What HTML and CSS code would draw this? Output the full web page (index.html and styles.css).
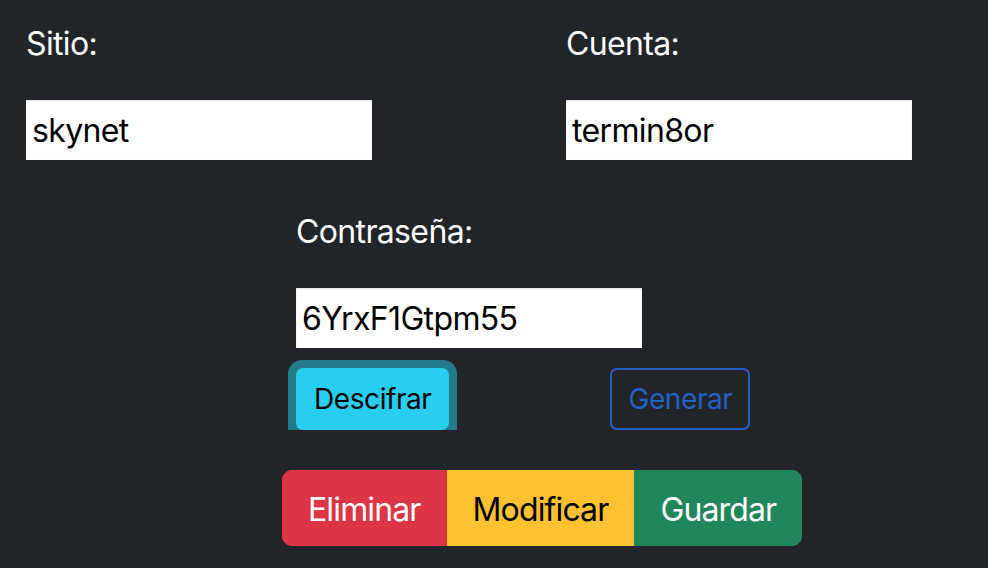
FILE: index.html
```html
<!DOCTYPE html>
<html lang="es">
<head>
<meta charset="utf-8">
<title>Contraseñas</title>
<link rel="stylesheet" href="styles.css">
</head>
<body>
<main class="page">
  <div class="row-top">
    <div class="field">
      <label class="label" for="sitio">Sitio:</label>
      <input class="input" id="sitio" type="text" value="skynet">
    </div>
    <div class="field">
      <label class="label" for="cuenta">Cuenta:</label>
      <input class="input" id="cuenta" type="text" value="termin8or">
    </div>
  </div>
  <div class="field field-pass">
    <label class="label" for="pass">Contraseña:</label>
    <input class="input" id="pass" type="text" value="6YrxF1Gtpm55">
  </div>
  <div class="row-actions">
    <div class="focus-ring"><button class="btn-sm btn-info" type="button">Descifrar</button></div>
    <button class="btn-sm btn-outline-primary" type="button">Generar</button>
  </div>
  <div class="row-group">
    <div class="btn-group">
      <button class="btn btn-danger" type="button">Eliminar</button>
      <button class="btn btn-warning" type="button">Modificar</button>
      <button class="btn btn-success" type="button">Guardar</button>
    </div>
  </div>
</main>
</body>
</html>
```

FILE: styles.css
```css
html, body {
  margin: 0;
  padding: 0;
  background: #212529;
  overflow: hidden;
}
body {
  color: #ffffff;
  font-family: Inter, "Noto Sans", "Liberation Sans", sans-serif;
  font-size: 32px;
  line-height: 48px;
  letter-spacing: -0.02em;
}
.page {
  padding-top: 20px;
}
.row-top {
  display: grid;
  grid-template-columns: 540px 1fr;
  padding-left: 26px;
}
.field {
  display: flex;
  flex-direction: column;
  align-items: flex-start;
}
.label {
  display: block;
  height: 48px;
  margin-bottom: 32px;
}
.input {
  box-sizing: border-box;
  width: 346px;
  height: 60px;
  margin: 0;
  padding: 0 6px;
  border: none;
  background: #ffffff;
  color: #000000;
  font-family: inherit;
  font-size: 32px;
  letter-spacing: -0.02em;
  box-shadow: inset 0 1px 2px rgba(0, 0, 0, 0.12);
  outline: none;
}
.field-pass {
  margin-top: 48px;
  padding-left: 296px;
}
.row-actions {
  display: flex;
  align-items: flex-start;
  padding-left: 288px;
  margin-top: 12px;
  height: 70px;
  gap: 152px;
}
.focus-ring {
  display: flex;
  padding: 8px 8px 0 8px;
  background: #247a8b;
  border-radius: 14px 14px 0 0;
}
.btn-sm {
  box-sizing: border-box;
  height: 62px;
  margin: 0;
  padding: 0 16px;
  border: 2px solid transparent;
  border-radius: 7px;
  font-family: inherit;
  font-size: 28px;
  line-height: 42px;
  letter-spacing: -0.015em;
  cursor: pointer;
}
.btn-info {
  background: #28cdef;
  border-color: #28cdef;
  color: #000000;
}
.btn-outline-primary {
  margin-top: 8px;
  margin-left: 1px;
  background: transparent;
  border-color: #2162c3;
  color: #2162c3;
}
.row-group {
  display: flex;
  padding-left: 282px;
  margin-top: 40px;
}
.btn-group {
  display: flex;
  border-radius: 10px;
  overflow: hidden;
}
.btn {
  box-sizing: border-box;
  height: 76px;
  margin: 0;
  padding: 3px 24px 0;
  border: 2px solid transparent;
  font-family: inherit;
  font-size: 32px;
  line-height: 48px;
  letter-spacing: -0.027em;
  cursor: pointer;
}
.btn-danger {
  background: #dc3545;
  border-color: #dc3545;
  color: #ffffff;
}
.btn-warning {
  background: #ffc12f;
  border-color: #ffc12f;
  color: #000000;
}
.btn-success {
  background: #21875a;
  border-color: #21875a;
  color: #ffffff;
}
```
